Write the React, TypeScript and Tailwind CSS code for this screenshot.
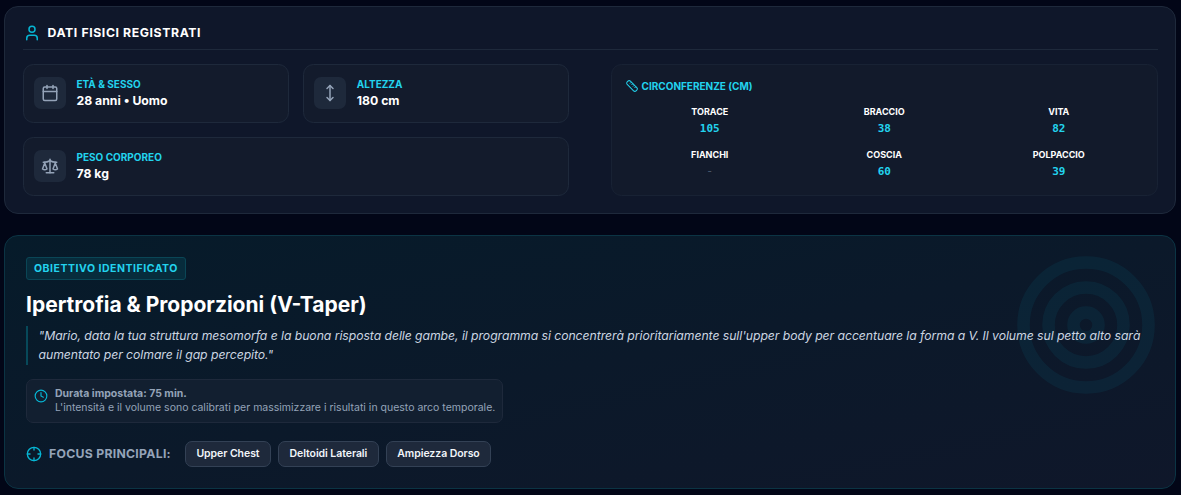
import React from 'react';
import {Calendar, Clock, Crosshair, MoveVertical, Scale, Target, User} from 'lucide-react';

const stats = [
    {label: 'Età & Sesso', value: '28 anni • Uomo', icon: Calendar, wide: false},
    {label: 'Altezza', value: '180 cm', icon: MoveVertical, wide: false},
    {label: 'Peso Corporeo', value: '78 kg', icon: Scale, wide: true},
];

const measures = [
    {label: 'Torace', value: '105'},
    {label: 'Braccio', value: '38'},
    {label: 'Vita', value: '82'},
    {label: 'Fianchi', value: null},
    {label: 'Coscia', value: '60'},
    {label: 'Polpaccio', value: '39'},
];

const focus = ['Upper Chest', 'Deltoidi Laterali', 'Ampiezza Dorso'];

const RulerIcon = () => (
    <svg width="12" height="12" viewBox="0 0 24 24" fill="none" stroke="currentColor" strokeWidth="2"
         strokeLinecap="round" strokeLinejoin="round">
        <rect x="-0.5" y="7.5" width="25" height="9" rx="3.5" transform="rotate(45 12 12)"/>
        <path d="m14.5 12.5 1.5-1.5M11.500 9.500l1.500-1.500M8.500 6.500l1.500-1.500M17.500 15.500l1.500-1.500"/>
    </svg>
);

const PhysicalData = () => (
    <section className="rounded-[14px] border border-[#1e293b] bg-[#0f172a] p-[17.5px]">
        <h3 className="mb-3.5 flex h-[25px] items-start gap-[7px] border-b border-[#1e293b] text-[12.25px] leading-[16px] font-bold tracking-[0.6px] text-white uppercase">
            <User size={18} className="-mt-px text-[#06b6d4]"/>
            Dati Fisici Registrati
        </h3>
        <div className="grid grid-cols-2 gap-[42px]">
            <div className="grid grid-cols-2 gap-3.5">
                {stats.map(({label, value, icon: Icon, wide}) => (
                    <div key={label}
                         className={`flex items-center gap-[10.5px] rounded-[10.5px] border border-[#1e293b] bg-[#131b2c] p-[10.5px] ${wide ? 'col-span-2' : ''}`}>
                        <div className="rounded-[7px] bg-[#1e293b] p-[7px] text-[#94a3b8]">
                            <Icon size={18}/>
                        </div>
                        <div>
                            <p className="text-[10px] leading-[15px] font-bold text-[#22d3ee] uppercase">{label}</p>
                            <p className="text-[12.25px] leading-[17.5px] font-bold text-white">{value}</p>
                        </div>
                    </div>
                ))}
            </div>
            <div className="rounded-[10.5px] border border-[#182234] bg-[#121a2b] p-3.5">
                <h4 className="mb-[11px] flex items-center gap-[3.5px] text-[10px] leading-[15px] font-bold text-[#22d3ee] uppercase">
                    <RulerIcon/>
                    Circonferenze (cm)
                </h4>
                <div className="grid grid-cols-3 gap-x-[7px] gap-y-[10.5px] text-center">
                    {measures.map((m) => (
                        <div key={m.label}>
                            <p className="mb-[1.75px] text-[9px] leading-[13.5px] font-bold text-white uppercase">{m.label}</p>
                            <p className={`font-["DejaVu_Sans_Mono",monospace] leading-[17.5px] ${m.value ? 'text-[11px] font-bold text-[#22d3ee]' : 'text-[12.25px] text-[#475569]'}`}>
                                {m.value || '-'}
                            </p>
                        </div>
                    ))}
                </div>
            </div>
        </div>
    </section>
);

const Goal = () => (
    <section className="relative h-[254px] overflow-hidden rounded-[14px] border border-[#0b3444] bg-linear-to-br from-[#061b2a] to-[#0f172a] p-[21px]">
        <div className="absolute top-3.5 right-3.5 text-[#06b6d4] opacity-[0.07]">
            <Target size={150}/>
        </div>
        <div className="relative">
            <div className="w-fit rounded-[3px] border border-[#0a4656] bg-[#072c3c] px-[7px] py-[3px] text-[10.5px] leading-[15px] font-bold tracking-[0.52px] text-[#22d3ee] uppercase">
                Obiettivo Identificato
            </div>
            <h2 className="mt-[10.5px] text-[21px] leading-[28px] font-bold text-white">Ipertrofia &amp; Proporzioni (V-Taper)</h2>
            <p className="mt-[7px] border-l-2 border-[#07495a] pl-[10.5px] text-[12.25px] leading-[19.5px] tracking-[-0.067px] text-[#cbd5e1] italic">
                "Mario, data la tua struttura mesomorfa e la buona risposta delle gambe, il programma si concentrerà
                prioritariamente sull'upper body per accentuare la forma a V. Il volume sul petto alto sarà aumentato per
                colmare il gap percepito."
            </p>
            <div className="mt-3.5 flex w-fit items-start gap-[7px] rounded-[7px] border border-[#1e293b] bg-[#121f30] p-[7px] text-[#94a3b8]">
                <Clock size={14} className="mt-[2px] text-[#06b6d4]"/>
                <div className="text-[10.5px] leading-[14px]">
                    <p className="font-bold">Durata impostata: 75 min.</p>
                    <p>L'intensità e il volume sono calibrati per massimizzare i risultati in questo arco temporale.</p>
                </div>
            </div>
            <div className="mt-[18px] flex items-center gap-[7px]">
                <div className="mr-[7px] flex items-center gap-[7px] text-[12.25px] leading-[17.5px] font-bold tracking-[0.27px] text-[#94a3b8] uppercase">
                    <Crosshair size={16} className="text-[#06b6d4]"/>
                    Focus Principali:
                </div>
                {focus.map((name) => (
                    <span key={name}
                          className="rounded-[7px] border border-[#334155] bg-[#1e293b] px-[10.5px] py-[5px] text-[10.5px] leading-[14px] font-semibold tracking-[-0.06px] text-[#f1f5f9]">
                        {name}
                    </span>
                ))}
            </div>
        </div>
    </section>
);

const App = () => {
    return (
        <div className='flex h-[495px] flex-col gap-[21px] overflow-hidden bg-[#020617] px-1 pt-[6.4px] pr-[5px] font-["Inter",sans-serif]'>
            <PhysicalData/>
            <Goal/>
        </div>
    );
};

export default App;
